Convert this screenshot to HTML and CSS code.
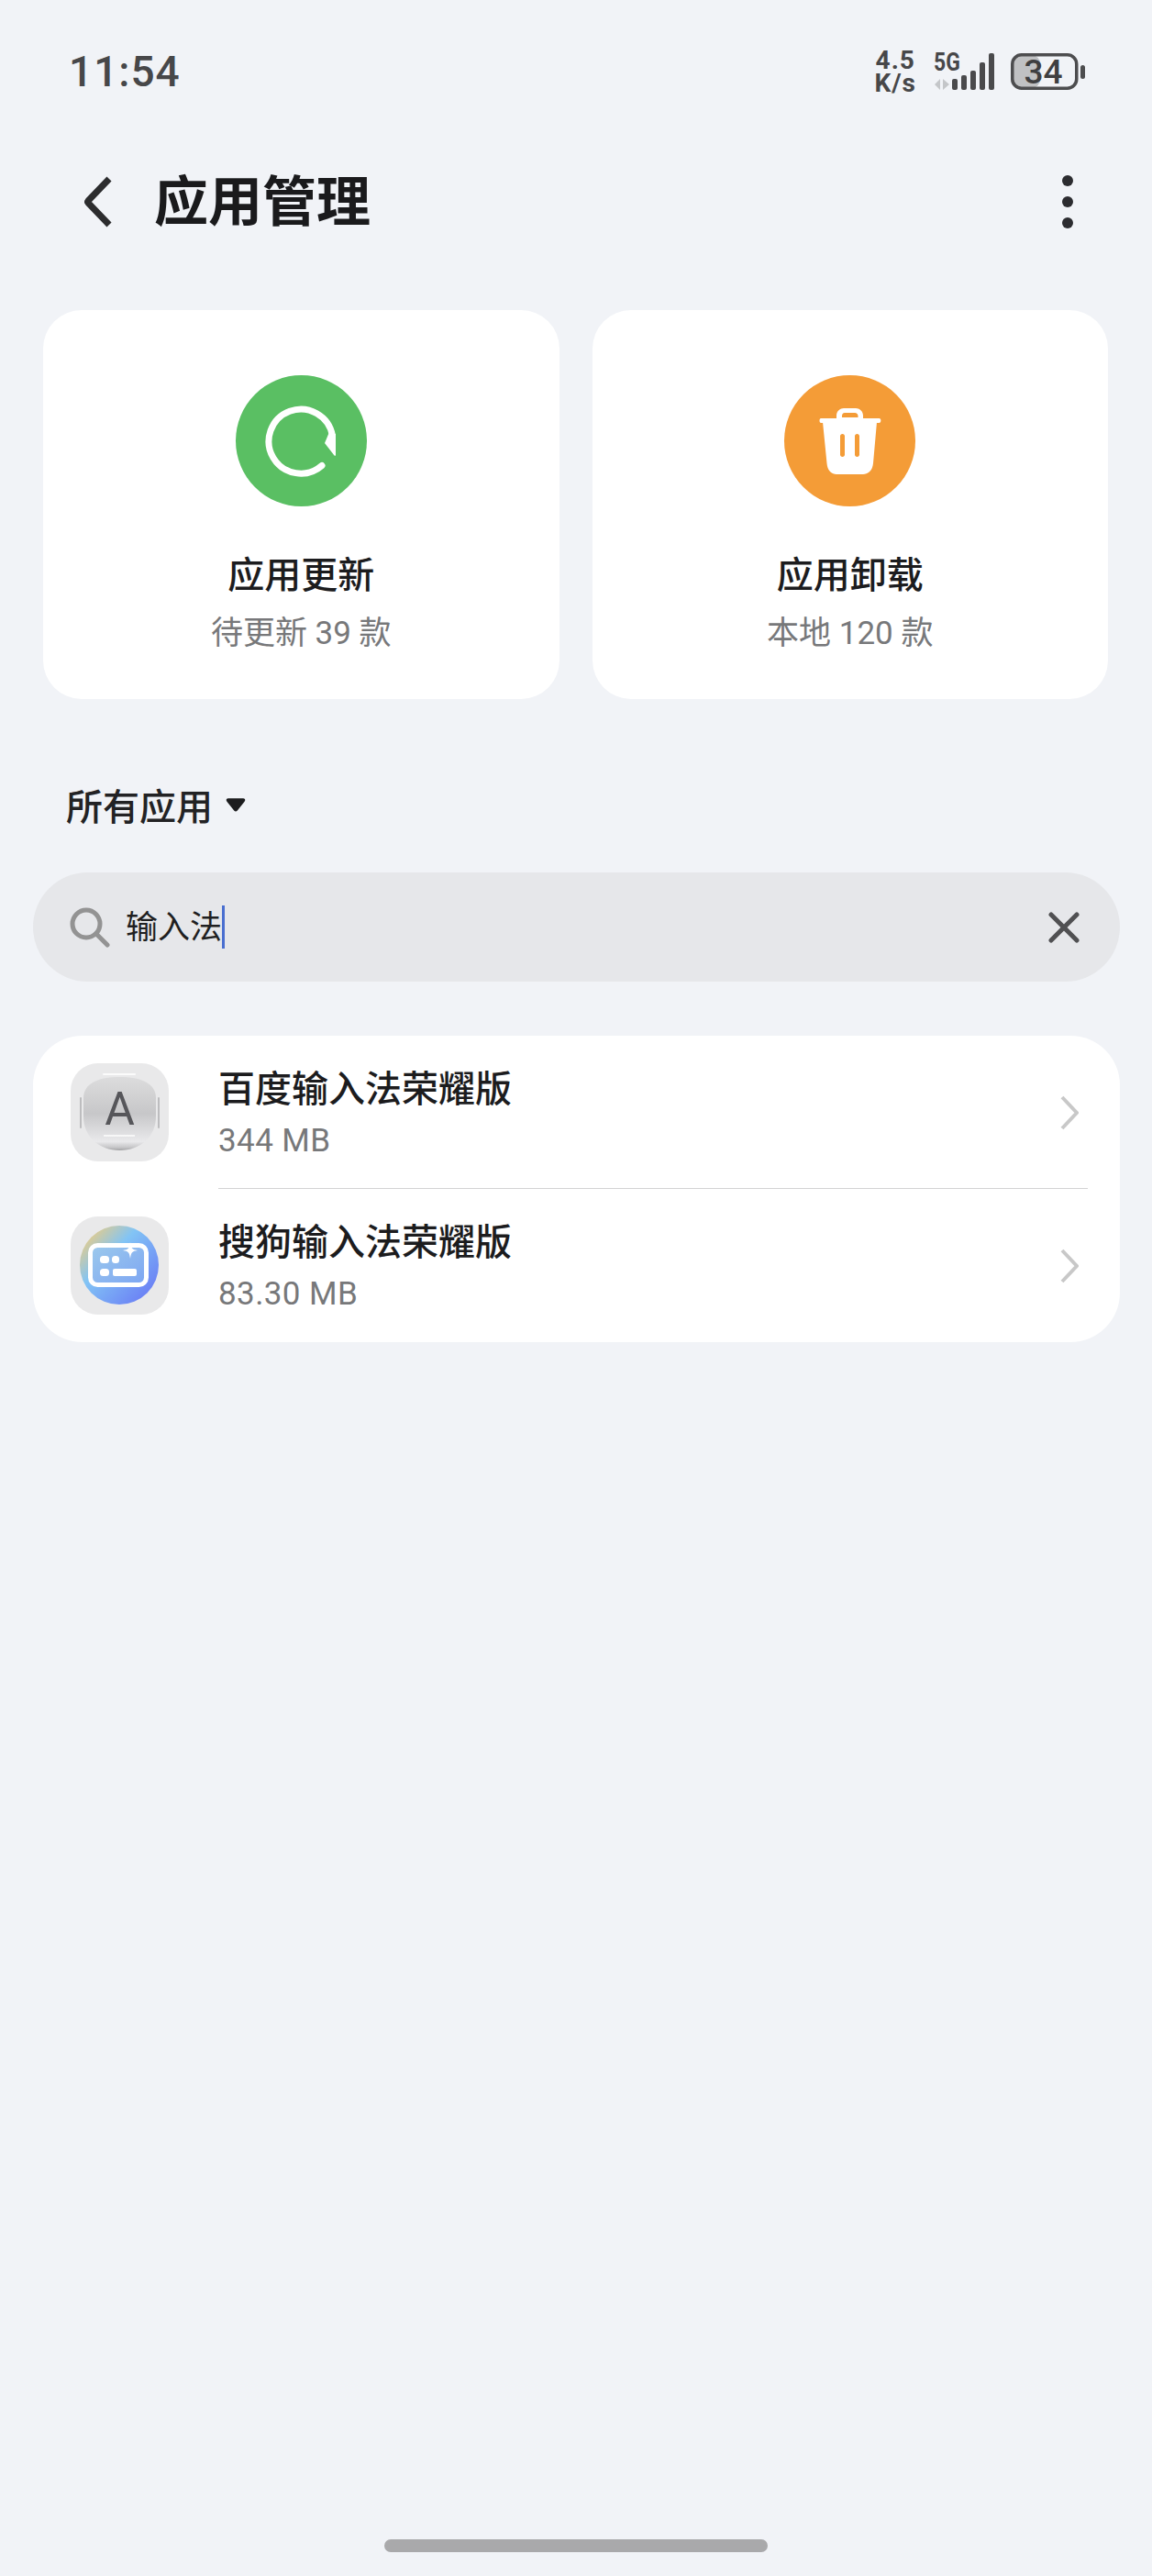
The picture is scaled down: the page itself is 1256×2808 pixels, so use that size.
FILE: index.html
```html
<!DOCTYPE html>
<html lang="zh-CN">
<head>
<meta charset="utf-8">
<title>应用管理</title>
<link rel="stylesheet" href="styles.css">
</head>
<body>
<div class="page">
  <div class="status">
    <span class="time">11:54</span>
    <div class="status-right">
      <div class="speed">4.5<br>K/s</div>
      <div class="signal">
        <span class="five-g">5G</span>
        <svg width="67" height="41" viewBox="0 0 67 41">
          <path d="M7 28v12l-6-6zM10 28l7 6-7 6z" fill="#c4c6c9"/>
          <rect x="20" y="28" width="6" height="12" rx="2" fill="#4a4a4c"/>
          <rect x="30" y="24" width="6" height="16" rx="2" fill="#4a4a4c"/>
          <rect x="40" y="19" width="6" height="21" rx="2" fill="#4a4a4c"/>
          <rect x="50" y="10" width="6" height="30" rx="2" fill="#4a4a4c"/>
          <rect x="60" y="0" width="6" height="40" rx="2" fill="#4a4a4c"/>
        </svg>
      </div>
      <svg class="battery" width="81" height="46" viewBox="0 -3 81 46">
        <rect x="2" y="2" width="30" height="36" rx="9" fill="#c0c1c3"/>
        <rect x="1.750" y="1.750" width="70" height="36.500" rx="10" fill="none" stroke="#4d4d4f" stroke-width="3.500"/>
        <rect x="76" y="13" width="5" height="15" rx="2.500" fill="#4d4d4f"/>
        <text x="35.500" y="33" class="batt-num">34</text>
      </svg>
    </div>
  </div>

  <header class="head">
    <svg class="back" width="36" height="56" viewBox="0 0 36 56"><path d="M29 3 6 27a1.500 1.500 0 0 0 0 2l23 24" fill="none" stroke="#2c2c2e" stroke-width="7"/></svg>
    <h1 class="title">应用管理</h1>
    <div class="more"><i></i><i></i><i></i></div>
  </header>

  <section class="cards">
    <div class="card">
      <div class="disc disc-green">
        <svg width="80" height="80" viewBox="0 0 80 80">
          <path d="M74.500 34A35 35 0 1 0 63 66.500" fill="none" stroke="#fff" stroke-width="7" stroke-linecap="round"/>
          <path d="M66 42 71 30 78 32 78 55C78 56 77 56 76.500 55.500z" fill="#fff"/>
        </svg>
      </div>
      <div class="card-title">应用更新</div>
      <div class="card-sub">待更新 39 款</div>
    </div>
    <div class="card">
      <div class="disc disc-orange">
        <svg width="68" height="72" viewBox="0 0 68 72">
          <path fill-rule="evenodd" fill="#fff" d="M19 11V8C19 3 23 0 27 0H40C44 0 48 3 48 8V11H65.500C68 11 68 16 65.500 16H2C0 16 0 11 2 11ZM25 10H42.500V8.500C42.500 6.500 41 5 39 5H28C26 5 25 6.500 25 8.500Z"/>
          <path fill-rule="evenodd" fill="#fff" d="M4 15H63L59 60C58.500 67 54 72 48 72H19C13 72 9 67 8.500 60ZM25.500 28C24 28 23 29 23 30.500V50.500C23 52 24 53 25.500 53S28 52 28 50.500V30.500C28 29 27 28 25.500 28ZM41.500 28C40 28 39 29 39 30.500V50.500C39 52 40 53 41.500 53S44 52 44 50.500V30.500C44 29 43 28 41.500 28Z"/>
        </svg>
      </div>
      <div class="card-title">应用卸载</div>
      <div class="card-sub">本地 120 款</div>
    </div>
  </section>

  <div class="filter">
    <span>所有应用</span>
    <svg width="22" height="17" viewBox="0 0 24 18"><path d="M3 1H21C23 1 24 3 22.500 5L14 15.500C13 17 11 17 10 15.500L1.500 5C0 3 1 1 3 1Z" fill="#1c1c1e"/></svg>
  </div>

  <div class="search">
    <svg class="search-icon" width="44" height="44" viewBox="0 0 44 44"><circle cx="18" cy="18" r="15" fill="none" stroke="#939393" stroke-width="5"/><path d="M29 29 41 41" stroke="#939393" stroke-width="5" stroke-linecap="round"/></svg>
    <span class="query">输入法</span><span class="caret"></span>
    <svg class="clear" width="34" height="34" viewBox="0 0 34 34"><path d="M3 3 31 31M31 3 3 31" stroke="#505052" stroke-width="5" stroke-linecap="round"/></svg>
  </div>

  <section class="list">
    <div class="row">
      <div class="app-icon">
        <svg width="107" height="107" viewBox="0 0 107 107">
          <defs>
            <linearGradient id="ball" x1="0" y1="0" x2="0" y2="1"><stop offset="0" stop-color="#dcdcdd"/><stop offset=".5" stop-color="#c7c7c9"/><stop offset=".88" stop-color="#e9e9eb"/><stop offset=".96" stop-color="#c6c6c8"/><stop offset="1" stop-color="#a0a0a2"/></linearGradient>
          </defs>
          <path d="M11 38V70M96 38V70" stroke="#bdbdbf" stroke-width="2" stroke-linecap="round"/>
          <path d="M14 38C14 22 30 15 53.500 15S93 22 93 38V58C93 80 76 95 53.500 95S14 80 14 58Z" fill="url(#ball)"/>
          <path d="M36 12H70" stroke="#fbfbfb" stroke-width="2" stroke-linecap="round"/>
          <path d="M36 79H70" stroke="#f7f7f7" stroke-width="2"/>
          <text x="53.500" y="67" class="key-a">A</text>
        </svg>
      </div>
      <div class="row-text">
        <div class="row-title">百度输入法荣耀版</div>
        <div class="row-sub">344 MB</div>
      </div>
      <svg class="chev" width="20" height="38" viewBox="0 0 20 38"><path d="M2 2 18 19 2 36" fill="none" stroke="#c8c8c8" stroke-width="4"/></svg>
    </div>
    <div class="row">
      <div class="app-icon">
        <svg width="107" height="107" viewBox="0 0 107 107">
          <defs>
            <linearGradient id="glob" x1="0.050" y1="0.100" x2="0.900" y2="0.900"><stop offset="0" stop-color="#efcd80"/><stop offset=".38" stop-color="#82c4f5"/><stop offset="1" stop-color="#6a7df5"/></linearGradient>
            <linearGradient id="pad" x1="0" y1="0" x2="1" y2="1"><stop offset="0" stop-color="#9ccaec"/><stop offset="1" stop-color="#7da5f3"/></linearGradient>
          </defs>
          <circle cx="53" cy="53" r="43" fill="url(#glob)"/>
          <rect x="21.500" y="31.500" width="61" height="43" rx="8" fill="url(#pad)" stroke="#fff" stroke-width="5"/>
          <rect x="32" y="43" width="10" height="8" rx="3.500" fill="#fff"/>
          <rect x="45" y="43" width="8" height="8" rx="3.500" fill="#fff"/>
          <rect x="32" y="57" width="10" height="8" rx="3.500" fill="#fff"/>
          <rect x="46" y="57" width="26" height="8" rx="2" fill="#fff"/>
          <path d="M65 28C66 35 67 36 73 37 67 38 66 39 65 46 64 39 63 38 57 37 63 36 64 35 65 28Z" fill="#fff"/>
        </svg>
      </div>
      <div class="row-text">
        <div class="row-title">搜狗输入法荣耀版</div>
        <div class="row-sub">83.30 MB</div>
      </div>
      <svg class="chev" width="20" height="38" viewBox="0 0 20 38"><path d="M2 2 18 19 2 36" fill="none" stroke="#c8c8c8" stroke-width="4"/></svg>
    </div>
  </section>

  <div class="home-bar"></div>
</div>
</body>
</html>
```
FILE: styles.css
```css
* { box-sizing: border-box; }
html, body { margin: 0; padding: 0; }
body {
  background: #f1f3f7;
  font-family: Roboto, "Noto Sans CJK SC", sans-serif;
  color: #1c1c1e;
}
.page { min-height: 2808px; display: flex; flex-direction: column; }

.status {
  height: 156px;
  padding: 0 73px 0 75px;
  display: flex;
  align-items: center;
  justify-content: space-between;
}
.time { font-size: 46px; font-weight: 500; letter-spacing: 1px; color: #474749; line-height: 1; }
.status-right { display: flex; align-items: center; }
.speed {
  text-align: center;
  font-size: 28px; font-weight: 700; line-height: 25px; letter-spacing: 1px; color: #474749;
  margin-right: 19px;
}
.signal { position: relative; width: 67px; height: 41px; margin-right: 17px; }
.signal svg { display: block; }
.five-g {
  position: absolute; left: 0; top: -3px;
  font-size: 27px; font-weight: 700; line-height: 27px; color: #474749;
  transform: scaleX(.85); transform-origin: left center;
}
.batt-num { font-family: Roboto, sans-serif; font-size: 37px; font-weight: 500; fill: #3f3f41; text-anchor: middle; }

.head {
  height: 128px;
  padding: 0 86px 0 90px;
  display: flex;
  align-items: center;
}
.back { flex: none; margin-right: 42px; }
.title { margin: 0; font-size: 59px; font-weight: 700; line-height: 1; flex: 1; color: #1a1a1c; }
.more { display: flex; flex-direction: column; gap: 11px; }
.more i { display: block; width: 12px; height: 12px; border-radius: 50%; background: #2c2c30; }

.cards {
  margin-top: 54px;
  padding: 0 48px 0 47px;
  display: grid;
  grid-template-columns: 1fr 1fr;
  gap: 36px;
}
.card {
  height: 424px;
  background: #fff;
  border-radius: 42px;
  display: flex;
  flex-direction: column;
  align-items: center;
  padding-top: 71px;
}
.disc {
  width: 143px; height: 143px; border-radius: 50%;
  display: flex; align-items: center; justify-content: center;
}
.disc-green { background: #5abf63; }
.disc-orange { background: #f49c37; }
.card-title { margin-top: 51px; font-size: 40px; font-weight: 500; line-height: 50px; color: #1c1c1e; }
.card-sub { margin-top: 15px; font-size: 35px; line-height: 46px; color: #77787a; }

.filter {
  margin-top: 75px;
  height: 80px;
  padding-left: 72px;
  display: flex;
  align-items: center;
  gap: 14px;
  font-size: 40px;
  font-weight: 500;
  color: #222224;
}

.search {
  margin: 34px 35px 0 36px;
  height: 119px;
  border-radius: 60px;
  background: #e6e7ea;
  display: flex;
  align-items: center;
  padding: 0 44px 0 40px;
}
.search-icon { flex: none; margin: 0 17px 0 0; }
.query { margin-top: 2px; font-size: 35px; color: #1f1f21; line-height: 1; }
.caret { width: 3px; height: 47px; background: #4a6fd0; }
.clear { margin-left: auto; }

.list {
  margin: 59px 35px 0 36px;
  background: #fff;
  border-radius: 54px;
}
.row {
  height: 167px;
  padding: 0 45px 0 41px;
  display: flex;
  align-items: center;
  position: relative;
}
.row + .row::before {
  content: "";
  position: absolute;
  left: 202px;
  right: 35px;
  top: -1px;
  height: 1px;
  background: #d2d2d4;
}
.app-icon {
  flex: none;
  width: 107px; height: 107px;
  border-radius: 30px;
  background: #e9e9ea;
  overflow: hidden;
  margin-right: 54px;
}
.app-icon svg { display: block; }
.key-a { font-family: Roboto, sans-serif; font-size: 50px; font-weight: 400; fill: #56565a; text-anchor: middle; }
.row-text { flex: 1; }
.row-title { padding-top: 3px; font-size: 40px; font-weight: 500; line-height: 54px; color: #1c1c1e; }
.row-sub { margin-top: 6px; font-size: 35px; letter-spacing: .4px; line-height: 46px; color: #77787a; }
.chev { flex: none; }

.home-bar {
  margin: auto auto 26px;
  width: 418px;
  height: 14px;
  border-radius: 7px;
  background: #a9a9ab;
}
```
